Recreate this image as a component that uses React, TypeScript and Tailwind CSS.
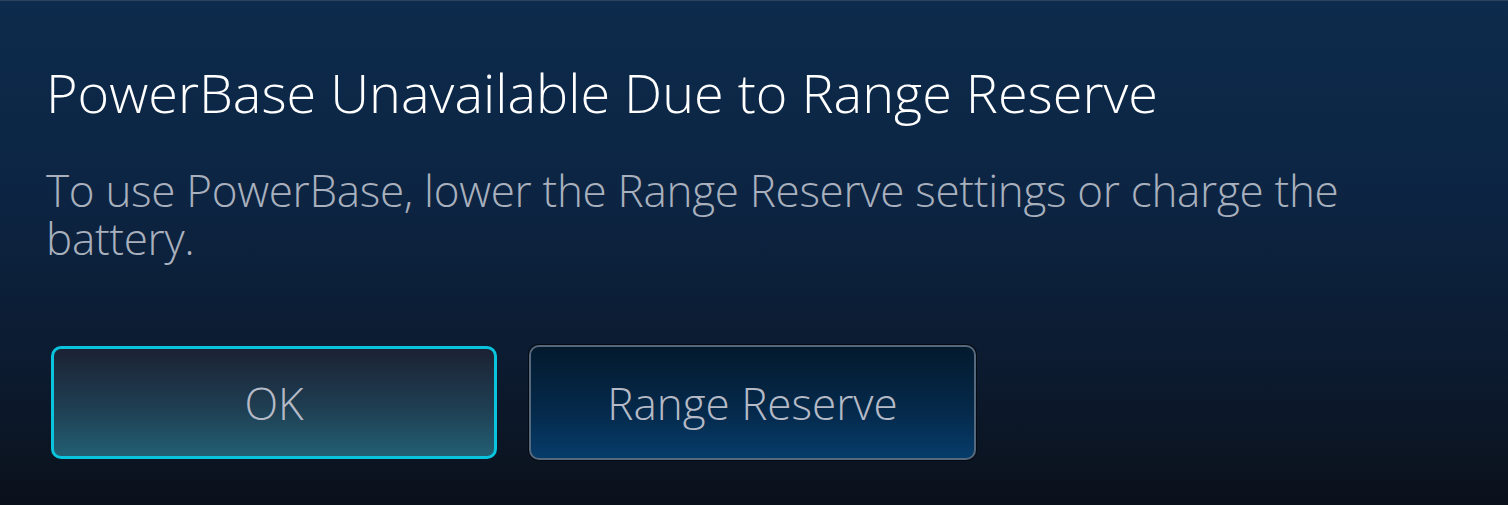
import React from "react";

export default function App() {
  return (
    <div
      className="w-[1508px] h-[505px] overflow-hidden border-t border-[#2c4360] bg-[linear-gradient(180deg,#0d2b4c_0%,#0c2442_40%,#0c1a2e_75%,#0b111b_100%)] px-[46px] pt-[58px]"
      style={{ fontFamily: '"Open Sans", "Noto Sans", sans-serif' }}
    >
      <h1 className="text-[54px] leading-[66px] font-light text-white">
        PowerBase Unavailable Due to Range Reserve
      </h1>
      <p className="mt-[41px] text-[44px] leading-[48px] font-light tracking-[-0.3px] text-[#a9b0bd] pr-[100px]">
        To use PowerBase, lower the Range Reserve settings or charge the battery.
      </p>
      <div className="mt-[84px] flex gap-[32px] pl-[5px]">
        <button className="w-[446px] h-[113px] rounded-[10px] border-[3px] border-[#0ac4de] bg-[linear-gradient(180deg,#1b2234_0%,#1f3e52_55%,#225f73_100%)] text-[44px] font-light text-[#b5bac6]">
          OK
        </button>
        <button className="w-[447px] h-[115px] -mt-[1px] rounded-[10px] border-[2px] border-[#56697c] shadow-[0_0_0_1px_#050a12] bg-[linear-gradient(180deg,#031a2e_0%,#052a4c_60%,#063c6a_100%)] text-[44px] font-light text-[#b5bac6]">
          Range Reserve
        </button>
      </div>
    </div>
  );
}
